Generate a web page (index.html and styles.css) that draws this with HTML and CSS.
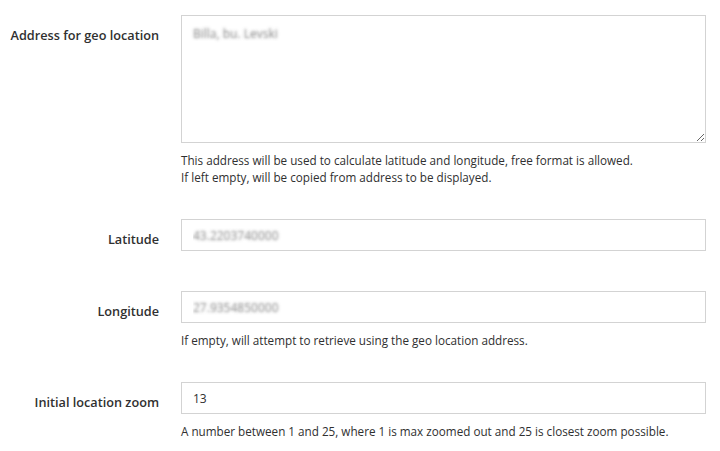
FILE: index.html
```html
<!DOCTYPE html>
<html lang="en">
<head>
<meta charset="utf-8">
<title>Geo location settings</title>
<link rel="stylesheet" href="styles.css">
</head>
<body>
<form class="form">
  <div class="field">
    <label class="label" for="geo-address">Address for geo location</label>
    <div class="control">
      <textarea id="geo-address" class="textarea blurred">Billa, bu. Levski</textarea>
      <div class="note">This address will be used to calculate latitude and longitude, free format is allowed.<br>If left empty, will be copied from address to be displayed.</div>
    </div>
  </div>
  <div class="field field-plain">
    <label class="label" for="lat">Latitude</label>
    <div class="control">
      <input id="lat" class="input blurred" type="text" value="43.2203740000">
    </div>
  </div>
  <div class="field">
    <label class="label" for="lng">Longitude</label>
    <div class="control">
      <input id="lng" class="input blurred" type="text" value="27.9354850000">
      <div class="note">If empty, will attempt to retrieve using the geo location address.</div>
    </div>
  </div>
  <div class="field">
    <label class="label" for="zoom">Initial location zoom</label>
    <div class="control">
      <input id="zoom" class="input" type="text" value="13">
      <div class="note">A number between 1 and 25, where 1 is max zoomed out and 25 is closest zoom possible.</div>
    </div>
  </div>
</form>
</body>
</html>
```

FILE: styles.css
```css
html, body {
  margin: 0;
  padding: 0;
  background: #ffffff;
}

body {
  font-family: "Open Sans", "Noto Sans", sans-serif;
  color: #303030;
}

.form {
  padding-top: 15px;
}

.field {
  display: grid;
  grid-template-columns: 159px 525px;
  column-gap: 22px;
  align-items: start;
  margin-bottom: 33px;
}

.field-plain {
  margin-bottom: 40px;
}

.label {
  text-align: right;
  font-size: 12.7px;
  font-weight: 600;
  line-height: 18px;
  padding-top: 11px;
  color: #303030;
}

.control {
  display: flex;
  flex-direction: column;
}

.textarea,
.input {
  box-sizing: border-box;
  width: 100%;
  margin: 0;
  border: 1px solid #d3d3d3;
  border-radius: 0;
  background: #ffffff;
  font-family: "Open Sans", "Noto Sans", sans-serif;
  font-size: 12px;
  color: #303030;
  outline: none;
}

.textarea {
  display: block;
  height: 128px;
  padding: 9px 11px;
  line-height: 18px;
  resize: vertical;
}

.input {
  display: block;
  height: 32px;
  padding: 0 11px;
  line-height: 30px;
}

.blurred {
  color: transparent;
  text-shadow: 0 0 3px rgba(80, 80, 80, 0.7);
}

.note {
  margin-top: 9px;
  font-size: 11.7px;
  line-height: 17px;
  color: #303030;
}
```
